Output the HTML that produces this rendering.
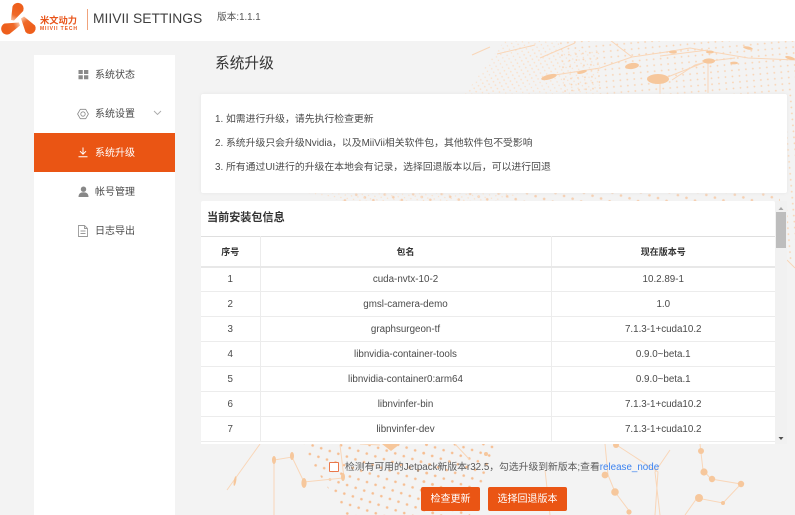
<!DOCTYPE html>
<html lang="zh">
<head>
<meta charset="utf-8">
<title>MIIVII SETTINGS</title>
<style>
*{box-sizing:border-box}
html,body{margin:0;padding:0;width:795px;height:515px;overflow:hidden;background:#f3f3f3;font-family:"Liberation Sans","Noto Sans CJK SC",sans-serif;color:#4a4a4a}
#wrap{position:absolute;left:0;top:0;width:795px;height:515px;overflow:hidden;filter:blur(.3px)}
.abs{position:absolute}
#top{left:0;top:0;width:795px;height:41px;background:#fff}
#bg{left:0;top:0}
#side{left:34px;top:55px;width:141px;height:460px;background:#fff}
.item{position:absolute;left:0;width:141px;height:39px;line-height:39px;font-size:10px;color:#4a4a4a}
.item span{position:absolute;left:61px;top:1px;white-space:nowrap}
.item svg{position:absolute;left:44px;top:14px}
.item.on{background:#ea5514;color:#fff}
#title{left:215px;top:54px;font-size:14.7px;line-height:20px;color:#333;white-space:nowrap}
#info{left:201px;top:94px;width:586px;height:99px;background:#fff;border-radius:2px;box-shadow:0 0 3px #e6e6e6}
#info div{position:absolute;left:14px;font-size:9.85px;line-height:14px;color:#4a4a4a;white-space:nowrap}
#card{left:201px;top:201px;width:574px;height:243px;background:#fff;border-radius:2px 2px 0 0;overflow:hidden}
#card h3{margin:0;position:absolute;left:6px;top:9px;font-size:11.1px;line-height:17px;font-weight:bold;color:#333;white-space:nowrap}
table{position:absolute;left:0;top:35px;width:574px;border-collapse:collapse;table-layout:fixed;border-top:1px solid #dfdfdf}
th,td{border:1px solid #ececec;border-top:0;text-align:center;padding:0;font-size:9.8px;color:#4a4a4a;font-weight:normal}
th{height:30px;font-size:9px;font-weight:bold;color:#333;border-bottom:2px solid #e8e8e8}
td{height:25px;padding-top:1px}
tr>*:first-child{border-left:0}tr>*:last-child{border-right:0}
#sb{left:775px;top:201px;width:12px;height:243px;background:#f1f1f1}
#thumb{left:776px;top:212px;width:10px;height:36px;background:#bdbdbd}
#chk{left:329px;top:462px;width:10px;height:10px;border:1px solid #e9774a;background:#fff;border-radius:1px}
#msg{left:345px;top:461px;font-size:9.8px;line-height:14px;color:#5a5a5a;white-space:nowrap}
#msg b{font-weight:normal;color:#3b82f0}
.btn{position:absolute;top:487px;height:24px;line-height:25px;background:#ea5514;color:#fff;font-size:10px;text-align:center;border-radius:2px}
</style>
</head>
<body>
<div id="wrap">
<svg id="bg" class="abs" width="795" height="515" viewBox="0 0 795 515">
<defs>
<pattern id="d1" width="7" height="6" patternUnits="userSpaceOnUse" patternTransform="rotate(-5)"><circle cx="2" cy="2" r=".9" fill="#f9d3b2"/></pattern>
<pattern id="d2" width="9" height="9" patternUnits="userSpaceOnUse" patternTransform="rotate(18)"><circle cx="3" cy="3" r="1.300" fill="#f6be92"/></pattern>
<pattern id="d3" width="5" height="4" patternUnits="userSpaceOnUse" patternTransform="rotate(-30)"><circle cx="1.500" cy="1.500" r=".7" fill="#fbe0c9"/></pattern>
</defs>
<path d="M560 40H795V94H560Z" fill="url(#d1)"/>
<path d="M465 94L530 50H600V94Z" fill="url(#d3)"/>
<path d="M505 40H560V70L500 94H465Z" fill="url(#d3)"/>
<path d="M787 94H795V260H787Z" fill="url(#d1)"/>
<path d="M340 193H780V201H340Z" fill="url(#d2)" opacity=".7"/>
<path d="M300 193L345 201H500L520 193Z" fill="url(#d3)"/>
<path d="M300 444H430L440 515H345Z" fill="url(#d2)"/>
<path d="M420 444H500L470 515H420Z" fill="url(#d2)"/>
<g fill="none" stroke="#f9d6b8" stroke-width="1">
<path d="M472 55L490 47M497 54L535 45M540 58L575 43M555 75L600 68 632 57 666 52 690 48 748 58 795 60"/>
<path d="M660 56L708 50M672 80L695 65 710 61 735 58M660 80L708 61M708 61V93M660 80V94M610 40L632 57"/>
<path d="M787 260L795 268M260 444L227 490"/>
<path d="M274 515V460L292 457 304 482 343 478M304 482L292 457M340 445L344 478"/>
<path d="M605 444L608 475 615 492 630 512M615 444L658 472 655 515M660 515L655 472 670 450M700 444L703 470 711 479 741 484 723 503 697 498 685 515"/>
<path d="M455 444L470 460M360 444L380 445M545 470L550 515"/>
</g>
<g fill="#f6c79c">
<ellipse cx="658" cy="79" rx="11" ry="5"/>
<ellipse cx="632" cy="66" rx="7" ry="3" transform="rotate(-8 632 66)"/>
<ellipse cx="549" cy="77" rx="8" ry="2.500" transform="rotate(-15 549 77)"/>
<ellipse cx="582" cy="72" rx="5" ry="1.600" transform="rotate(-15 582 72)"/>
<ellipse cx="709" cy="61" rx="6" ry="2.600"/>
<ellipse cx="673" cy="52" rx="4" ry="1.600"/>
<ellipse cx="710" cy="52" rx="4" ry="1.500"/>
<ellipse cx="734" cy="63" rx="4" ry="1.400"/>
<ellipse cx="748" cy="48" rx="5" ry="1.500" transform="rotate(12 748 48)"/>
<ellipse cx="790" cy="58" rx="5" ry="1.500" transform="rotate(15 790 58)"/>
<ellipse cx="274" cy="460" rx="2" ry="4"/>
<ellipse cx="292" cy="456" rx="2" ry="4"/>
<ellipse cx="304" cy="483" rx="2.600" ry="5"/>
<ellipse cx="343" cy="477" rx="2" ry="4"/>
<ellipse cx="235" cy="481" rx="1.200" ry="5" transform="rotate(10 235 481)"/>
<path d="M382 444H400L391 451Z"/>
<circle cx="605" cy="475" r="3.400"/><circle cx="615" cy="492" r="3.800"/><circle cx="629" cy="512" r="2.600"/>
<circle cx="701" cy="451" r="3"/><circle cx="704" cy="472" r="3.600"/><circle cx="712" cy="479" r="3.200"/><circle cx="741" cy="484" r="3.200"/><circle cx="723" cy="503" r="2"/><circle cx="699" cy="498" r="4"/>
<circle cx="616" cy="445" r="3"/><circle cx="486" cy="454" r="2"/>
</g>
</svg>

<div id="top" class="abs"></div>
<svg class="abs" style="left:0;top:0" width="90" height="40" viewBox="0 0 90 40">
<defs>
<linearGradient id="g1" gradientUnits="userSpaceOnUse" x1="18" y1="8" x2="12" y2="21"><stop offset="0" stop-color="#ee5f1c"/><stop offset=".55" stop-color="#ef6a2a"/><stop offset="1" stop-color="#f9c8ab"/></linearGradient>
<linearGradient id="g2" gradientUnits="userSpaceOnUse" x1="7" y1="29" x2="20" y2="24"><stop offset="0" stop-color="#ee5f1c"/><stop offset=".55" stop-color="#ef6a2a"/><stop offset="1" stop-color="#f9c8ab"/></linearGradient>
<linearGradient id="g3" gradientUnits="userSpaceOnUse" x1="30" y1="28" x2="22" y2="17"><stop offset="0" stop-color="#ee5f1c"/><stop offset=".55" stop-color="#ef6a2a"/><stop offset="1" stop-color="#f9c8ab"/></linearGradient>
</defs>
<path fill="url(#g1)" d="M12.500 6.500A5.800 5.800 0 0 1 23.200 11L14 20.500 11 20Z"/>
<path fill="url(#g2)" d="M4.500 23.500L19 22.500 20 25.500 9.500 34A5.800 5.800 0 0 1 4.500 23.500Z"/>
<path fill="url(#g3)" d="M21 18.500L24 16.500 35 25.500A5.800 5.800 0 0 1 25.500 32Z"/>
<text x="40" y="23.500" font-size="9.200" font-weight="bold" fill="#e8541a" font-family="'Liberation Sans','Noto Sans CJK SC',sans-serif" textLength="37" lengthAdjust="spacingAndGlyphs">米文动力</text>
<text x="40" y="30" font-size="5" font-weight="bold" fill="#e8541a" font-family="'Liberation Sans',sans-serif" textLength="37" lengthAdjust="spacing">MIIVII TECH</text>
</svg>
<div class="abs" style="left:87px;top:9px;width:1px;height:21px;background:#f0a37c"></div>
<div class="abs" style="left:93px;top:9px;font-size:13.850px;line-height:18px;color:#3f3f3f;white-space:nowrap">MIIVII SETTINGS</div>
<div class="abs" style="left:217px;top:11px;font-size:9.700px;line-height:14px;color:#555;white-space:nowrap">版本:1.1.1</div>

<div id="side" class="abs">
<div class="item" style="top:0">
<svg width="11" height="11" viewBox="0 0 11 11"><path fill="#8a8a8a" d="M.5 1h4.300v4H.5zM6 1h4.300v4H6zM.5 6.300h4.300v4H.5zM6 6.300h4.300v4H6z"/></svg>
<span>系统状态</span></div>
<div class="item" style="top:39px">
<svg width="12" height="12" viewBox="0 0 12 12" fill="none" stroke="#888" style="left:43px"><path d="M3.300 1.300h5.400L11.400 6 8.700 10.700H3.300L.6 6z" stroke-width=".8" stroke-linejoin="round"/><circle cx="6" cy="6" r="2.200" stroke-width=".8"/></svg>
<span>系统设置</span>
<svg width="9" height="6" viewBox="0 0 9 6" fill="none" stroke="#aaa" style="left:119px;top:16px"><path d="M1 1L4.500 4.500 8 1" stroke-width=".9"/></svg></div>
<div class="item on" style="top:78px">
<svg width="10" height="11" viewBox="0 0 10 11" fill="none" stroke="#fff" style="left:44px"><path d="M5 0.500V7M2 4.200L5 7.200 8 4.200M.5 9.800H9.500" stroke-width="1"/></svg>
<span>系统升级</span></div>
<div class="item" style="top:117px">
<svg width="11" height="11" viewBox="0 0 11 11" style="left:44px"><circle cx="5.500" cy="3.200" r="2.700" fill="#888"/><path fill="#888" d="M.5 11C.5 7.800 2.500 6.300 5.500 6.300S10.500 7.800 10.500 11z"/></svg>
<span>帐号管理</span></div>
<div class="item" style="top:156px">
<svg width="10" height="12" viewBox="0 0 10 12" fill="none" stroke="#999" style="left:44px;top:14px"><path d="M.5.500H6.500L9.500 3.500V11.500H.5zM6.500.500V3.500H9.500M2.500 6H7.500M2.500 8.500H7.500" stroke-width=".9"/></svg>
<span>日志导出</span></div>
</div>

<div id="title" class="abs">系统升级</div>

<div id="info" class="abs">
<div style="top:19px">1. 如需进行升级，请先执行检查更新</div>
<div style="top:43px">2. 系统升级只会升级Nvidia，以及MiiVii相关软件包，其他软件包不受影响</div>
<div style="top:67px">3. 所有通过UI进行的升级在本地会有记录，选择回退版本以后，可以进行回退</div>
</div>

<div id="card" class="abs">
<h3>当前安装包信息</h3>
<table>
<colgroup><col style="width:59px"><col style="width:291px"><col style="width:224px"></colgroup>
<tr><th>序号</th><th>包名</th><th>现在版本号</th></tr>
<tr><td>1</td><td>cuda-nvtx-10-2</td><td>10.2.89-1</td></tr>
<tr><td>2</td><td>gmsl-camera-demo</td><td>1.0</td></tr>
<tr><td>3</td><td>graphsurgeon-tf</td><td>7.1.3-1+cuda10.2</td></tr>
<tr><td>4</td><td>libnvidia-container-tools</td><td>0.9.0~beta.1</td></tr>
<tr><td>5</td><td>libnvidia-container0:arm64</td><td>0.9.0~beta.1</td></tr>
<tr><td>6</td><td>libnvinfer-bin</td><td>7.1.3-1+cuda10.2</td></tr>
<tr><td>7</td><td>libnvinfer-dev</td><td>7.1.3-1+cuda10.2</td></tr>
</table>
</div>

<div id="sb" class="abs"></div>
<div id="thumb" class="abs"></div>
<svg class="abs" style="left:775px;top:201px" width="12" height="243" viewBox="0 0 12 243"><path fill="#a8a8a8" d="M3.500 9L6 6 8.500 9z"/><path fill="#505050" d="M3.500 236L6 239 8.500 236z"/></svg>

<div id="chk" class="abs"></div>
<div id="msg" class="abs">检测有可用的Jetpack新版本r32.5，勾选升级到新版本;查看<b>release_node</b></div>
<div class="btn" style="left:421px;width:59px">检查更新</div>
<div class="btn" style="left:488px;width:79px">选择回退版本</div>
</div>
</body>
</html>
